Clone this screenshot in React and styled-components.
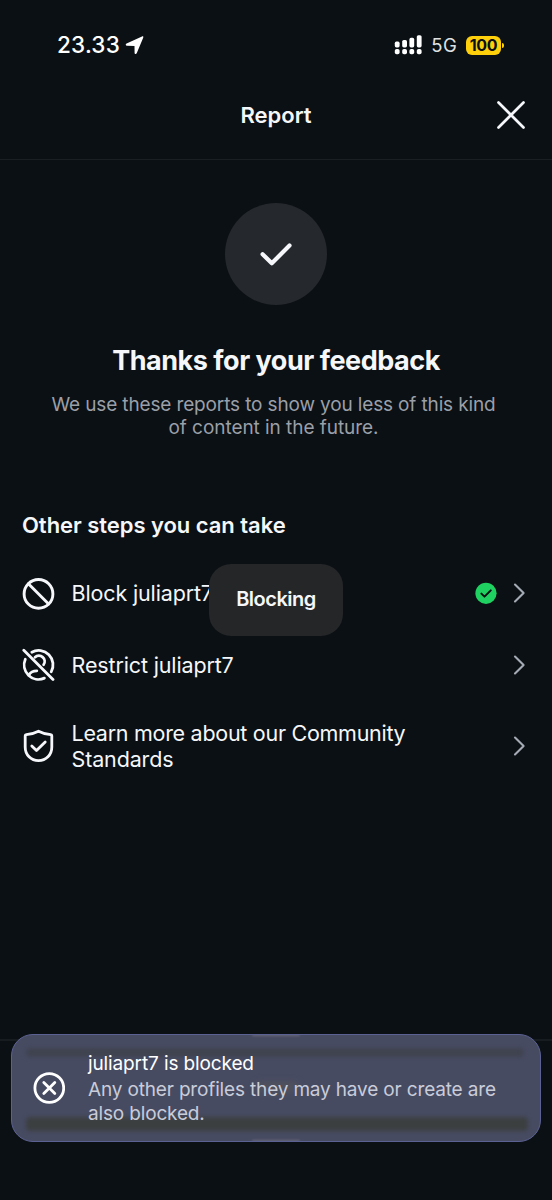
import React from 'react';
import styled, { createGlobalStyle } from 'styled-components';

const GlobalStyle = createGlobalStyle`
  * {
    box-sizing: border-box;
  }

  body {
    margin: 0;
    background: #0b1014;
    font-family: Inter, "Liberation Sans", sans-serif;
    color: #f5f7fa;
    -webkit-font-smoothing: antialiased;
  }

  h1, h2, h3, p {
    margin: 0;
  }
`;

const Screen = styled.div`
  position: relative;
  width: 552px;
  height: 1200px;
  display: flex;
  flex-direction: column;
  overflow: hidden;
  background: #0b1014;
`;

const Label = styled.span`
  font-size: ${({ $size }) => $size}px;
  font-weight: ${({ $weight }) => $weight || 400};
  letter-spacing: ${({ $track }) => $track || 0}px;
  line-height: ${({ $line }) => $line || 24}px;
  color: ${({ $color }) => $color || '#f5f7fa'};
  white-space: nowrap;
`;

const StatusBar = styled.div`
  height: 72px;
  padding: 17px 48px 0 57px;
  display: flex;
  justify-content: space-between;
  align-items: flex-start;
`;

const StatusGroup = styled.div`
  display: flex;
  align-items: center;
  height: 56px;
  gap: ${({ $gap }) => $gap}px;
`;

const Battery = styled.div`
  display: flex;
  align-items: center;
  gap: 1px;

  &::after {
    content: '';
    width: 2px;
    height: 5px;
    border-radius: 0 3px 3px 0;
    background: #fdd00b;
  }
`;

const BatteryLevel = styled.div`
  width: 35px;
  height: 19px;
  border-radius: 6px;
  display: flex;
  align-items: center;
  justify-content: center;
  background: #fdd00b;
`;

const Header = styled.header`
  height: 88px;
  padding: 0 26px 2px;
  display: grid;
  grid-template-columns: 30px 1fr 30px;
  align-items: center;
  text-align: center;
  border-bottom: 1px solid #1a1f23;
`;

const CloseButton = styled.button`
  padding: 0;
  border: none;
  background: none;
  height: 30px;
`;

const Summary = styled.section`
  padding-top: 43px;
  display: flex;
  flex-direction: column;
  align-items: center;
  text-align: center;
`;

const CheckCircle = styled.div`
  width: 102px;
  height: 102px;
  border-radius: 50%;
  background: #25282d;
  margin-bottom: 39px;
`;

const Description = styled.div`
  display: flex;
  flex-direction: column;
  align-items: center;
  margin-top: 15px;
  padding-right: 5px;
`;

const Steps = styled.section`
  padding: 72px 26px 0 22px;
  display: flex;
  flex-direction: column;
  gap: 18px;
`;

const StepList = styled.div`
  display: flex;
  flex-direction: column;
`;

const StepRow = styled.div`
  display: grid;
  grid-template-columns: 33px 1fr auto;
  column-gap: 16.5px;
  align-items: center;
  height: ${({ $height }) => $height}px;
`;

const StepText = styled.div`
  display: flex;
  flex-direction: column;
`;

const StepEnd = styled.div`
  display: flex;
  align-items: center;
  gap: 16px;
`;

const Footer = styled.footer`
  margin-top: auto;
  height: 161px;
  border-top: 2px solid #171c20;
`;

const Toast = styled.div`
  position: absolute;
  left: 209px;
  top: 563.5px;
  width: 134px;
  height: 72.5px;
  padding-bottom: 2px;
  border-radius: 22px;
  display: flex;
  align-items: center;
  justify-content: center;
  background: #252628;
`;

const Snackbar = styled.div`
  position: absolute;
  left: 11px;
  top: 1034px;
  width: 530px;
  height: 108px;
  padding: 0 21px;
  border: 1px solid #5c6193;
  border-radius: 22px;
  display: flex;
  align-items: center;
  gap: 23px;
  overflow: hidden;
  background: #474b62;
`;

const Shade = styled.div`
  position: absolute;
  left: ${({ $left }) => $left}px;
  top: ${({ $top }) => $top}px;
  width: ${({ $width }) => $width}px;
  height: ${({ $height }) => $height}px;
  border-radius: 4px;
  background: ${({ $color }) => $color};
  filter: blur(${({ $blur }) => $blur || 2}px);
`;

const SnackbarIcon = styled.svg`
  position: relative;
  flex: none;
`;

const SnackbarText = styled.div`
  position: relative;
  display: flex;
  flex-direction: column;
`;

const stroke = {
  fill: 'none',
  stroke: '#f5f7fa',
  strokeLinecap: 'round',
  strokeLinejoin: 'round',
};

const LocationIcon = () => (
  <svg width="19" height="19" viewBox="0 0 18 19">
    <path
      d="M16.5.5c1-.4 1.6.2 1.2 1.2L11.2 17.2c-.5 1.2-2.1 1-2.1-.3L9 9.9 1.5 9.7C0 9.6-.2 8 1.1 7.4Z"
      fill="#fff"
    />
  </svg>
);

const SignalIcon = () => (
  <svg width="28" height="20" viewBox="0 0 28 20" fill="#fff">
    <rect x="0.8" y="6.6" width="4.8" height="5.8" rx="1.6" />
    <rect x="8.2" y="5" width="4.8" height="7.4" rx="1.6" />
    <rect x="15.4" y="2.8" width="4.8" height="9.6" rx="1.6" />
    <rect x="22.8" y="0.2" width="4.8" height="12.2" rx="1.6" />
    <rect x="0.8" y="14" width="4.8" height="5.2" rx="1.8" />
    <rect x="8.2" y="14" width="4.8" height="5.2" rx="1.8" />
    <rect x="15.4" y="14" width="4.8" height="5.2" rx="1.8" />
    <rect x="22.8" y="14" width="4.8" height="5.2" rx="1.8" />
  </svg>
);

const CloseIcon = () => (
  <svg width="30" height="30" viewBox="0 0 30 30" {...stroke} strokeWidth="2.7">
    <path d="M2.5 2.5 27.5 27.5M27.5 2.5 2.5 27.5" />
  </svg>
);

const CheckIcon = () => (
  <svg width="102" height="102" viewBox="0 0 102 102" {...stroke} strokeWidth="4.2">
    <path d="M37.6 51.2 46.8 60.2 64.5 42.6" />
  </svg>
);

const BlockIcon = () => (
  <svg width="33" height="33" viewBox="0 -0.4 33 33" {...stroke} strokeWidth="2.9">
    <circle cx="16.5" cy="16.5" r="14.4" />
    <path d="M6.4 6.4 26.6 26.6" />
  </svg>
);

const RestrictIcon = () => (
  <svg width="33" height="34" viewBox="0 -0.5 33 34" {...stroke} strokeWidth="2.8">
    <path d="M1.8 1.8 31 31" />
    <path d="M9.8 3.7A14.4 14.4 0 0 1 29.2 23.4" />
    <path d="M3.3 10.8A14.4 14.4 0 0 0 22.4 29.6" />
    <path d="M13 8.8A5.7 5.7 0 0 1 21.6 16.2" />
    <path d="M7 26.2C8.4 23.8 10.8 22.4 14.8 22.3" />
  </svg>
);

const ShieldIcon = () => (
  <svg width="33" height="35" viewBox="0 -0.7 33 35" {...stroke} strokeWidth="2.8">
    <path d="M16.5 2.5C12.7 4.5 8 5.6 4.3 5.9 3.6 6 3.2 6.4 3.2 7.1V18.3C3.2 26.3 9 31.9 16.5 31.9S29.8 26.3 29.8 18.3V7.1C29.8 6.4 29.4 6 28.7 5.9 25 5.6 20.3 4.5 16.5 2.5Z" />
    <path d="M9.8 17.2 14.5 21.9 23.2 13.3" />
  </svg>
);

const DoneIcon = () => (
  <svg width="22" height="22" viewBox="0 -0.3 22 22">
    <circle cx="11" cy="11" r="10.6" fill="#1fd160" />
    <path
      d="M6.4 11.3 9.5 14.3 15.8 8.1"
      fill="none"
      stroke="#0b1014"
      strokeWidth="2"
      strokeLinecap="round"
      strokeLinejoin="round"
    />
  </svg>
);

const ChevronIcon = () => (
  <svg width="13" height="20" viewBox="0 0 13 20" {...stroke} stroke="#a5abb4" strokeWidth="2.1">
    <path d="M2 1.5 10.6 10 2 18.5" />
  </svg>
);

const BlockedIcon = () => (
  <SnackbarIcon width="32" height="32" viewBox="0 0 32 32" {...stroke} stroke="#fff" strokeWidth="2.8">
    <circle cx="16.3" cy="16" r="14.4" />
    <path d="M10.8 10.5 21.8 21.5M21.8 10.5 10.8 21.5" />
  </SnackbarIcon>
);

const steps = [
  { icon: <BlockIcon />, lines: ['Block juliaprt7'], height: 72, done: true },
  { icon: <RestrictIcon />, lines: ['Restrict juliaprt7'], height: 71 },
  { icon: <ShieldIcon />, lines: ['Learn more about our Community', 'Standards'], height: 91 },
];

export default function App() {
  return (
    <>
      <GlobalStyle />
      <Screen>
        <StatusBar>
          <StatusGroup $gap={5}>
            <Label $size={22.5} $weight={500} $track={0.2} $color="#fff">23.33</Label>
            <LocationIcon />
          </StatusGroup>
          <StatusGroup $gap={9}>
            <SignalIcon />
            <Label $size={18.5} $track={0.3} $color="#dfe2e4">5G</Label>
            <Battery>
              <BatteryLevel>
                <Label $size={16} $weight={700} $track={-0.4} $color="#0b1014">100</Label>
              </BatteryLevel>
            </Battery>
          </StatusGroup>
        </StatusBar>

        <Header>
          <span />
          <Label as="h1" $size={22} $weight={600}>Report</Label>
          <CloseButton aria-label="Close">
            <CloseIcon />
          </CloseButton>
        </Header>

        <Summary>
          <CheckCircle>
            <CheckIcon />
          </CheckCircle>
          <Label as="h2" $size={27} $weight={700} $track={-0.47} $line={34}>Thanks for your feedback</Label>
          <Description>
            <Label $size={19} $track={-0.14} $color="#9a9fa8" $line={23}>We use these reports to show you less of this kind</Label>
            <Label $size={19} $track={-0.05} $color="#9a9fa8" $line={23}>of content in the future.</Label>
          </Description>
        </Summary>

        <Steps>
          <Label as="h3" $size={22} $weight={600} $track={-0.04} $line={28}>Other steps you can take</Label>
          <StepList>
            {steps.map(({ icon, lines, height, done }) => (
              <StepRow key={lines[0]} $height={height}>
                {icon}
                <StepText>
                  {lines.map((line) => (
                    <Label key={line} $size={21.5} $track={line.length > 20 ? -0.28 : -0.14} $line={26}>{line}</Label>
                  ))}
                </StepText>
                <StepEnd>
                  {done && <DoneIcon />}
                  <ChevronIcon />
                </StepEnd>
              </StepRow>
            ))}
          </StepList>
        </Steps>

        <Footer />

        <Toast>
          <Label $size={20} $weight={600} $track={-0.5}>Blocking</Label>
        </Toast>

        <Snackbar>
          <Shade $left={14} $top={13} $width={498} $height={9} $color="#3f434f" />
          <Shade $left={14} $top={82} $width={502} $height={14} $color="#3c3f40" />
          <Shade $left={240} $top={-1} $width={48} $height={2} $color="#68697c" $blur={1} />
          <Shade $left={240} $top={105} $width={48} $height={2} $color="#68697c" $blur={1} />
          <Shade $left={244} $top={47} $width={42} $height={10} $color="#50525c" $blur={3} />
          <BlockedIcon />
          <SnackbarText>
            <Label $size={19} $track={-0.12} $line={26} $color="#fff">juliaprt7 is blocked</Label>
            <Label $size={19} $track={-0.16} $line={25} $color="#c9ccd9">Any other profiles they may have or create are</Label>
            <Label $size={19} $track={-0.16} $line={23} $color="#c9ccd9">also blocked.</Label>
          </SnackbarText>
        </Snackbar>
      </Screen>
    </>
  );
}
